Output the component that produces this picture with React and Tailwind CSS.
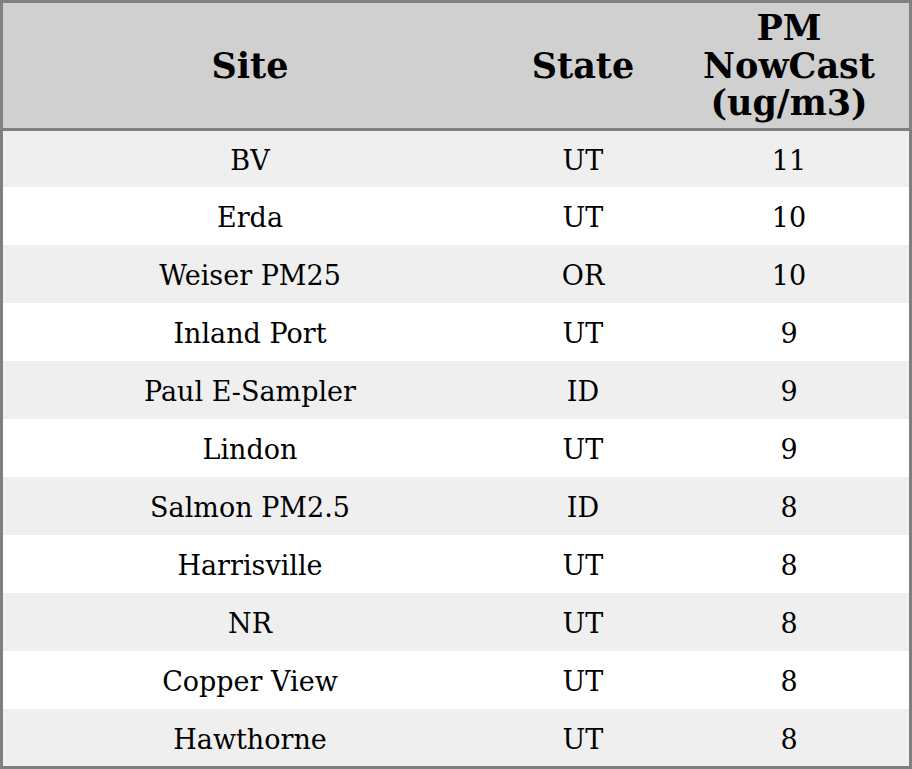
const rows = [
  ["BV", "UT", "11"],
  ["Erda", "UT", "10"],
  ["Weiser PM25", "OR", "10"],
  ["Inland Port", "UT", "9"],
  ["Paul E-Sampler", "ID", "9"],
  ["Lindon", "UT", "9"],
  ["Salmon PM2.5", "ID", "8"],
  ["Harrisville", "UT", "8"],
  ["NR", "UT", "8"],
  ["Copper View", "UT", "8"],
  ["Hawthorne", "UT", "8"],
];

export default function App() {
  return (
    <div className="w-[912px] h-[769px] bg-white font-['DejaVu_Serif',serif] text-black">
      <div className="flex flex-col h-full border-[3px] border-[#808080]">
        <div className="flex h-[125px] shrink-0 items-center bg-[#d0d0d0] border-b-[3px] border-[#808080] box-content text-[35px] leading-[37.5px] font-bold text-center">
          <div className="w-[494px]">Site</div>
          <div className="w-[172px]">State</div>
          <div className="flex-1">PM<br />NowCast<br />(ug/m3)</div>
        </div>
        <div className="flex flex-col flex-1 min-h-0 text-[27px]">
          {rows.map((r, i) => (
            <div
              key={r[0]}
              className={`flex items-center text-center pt-[5px] ${i === 0 ? "h-[56px]" : i === rows.length - 1 ? "h-[57px]" : "h-[58px]"} ${i % 2 === 0 ? "bg-[#efefef]" : "bg-white"}`}
            >
              <div className="w-[494px]">{r[0]}</div>
              <div className="w-[172px]">{r[1]}</div>
              <div className="flex-1">{r[2]}</div>
            </div>
          ))}
        </div>
      </div>
    </div>
  );
}
